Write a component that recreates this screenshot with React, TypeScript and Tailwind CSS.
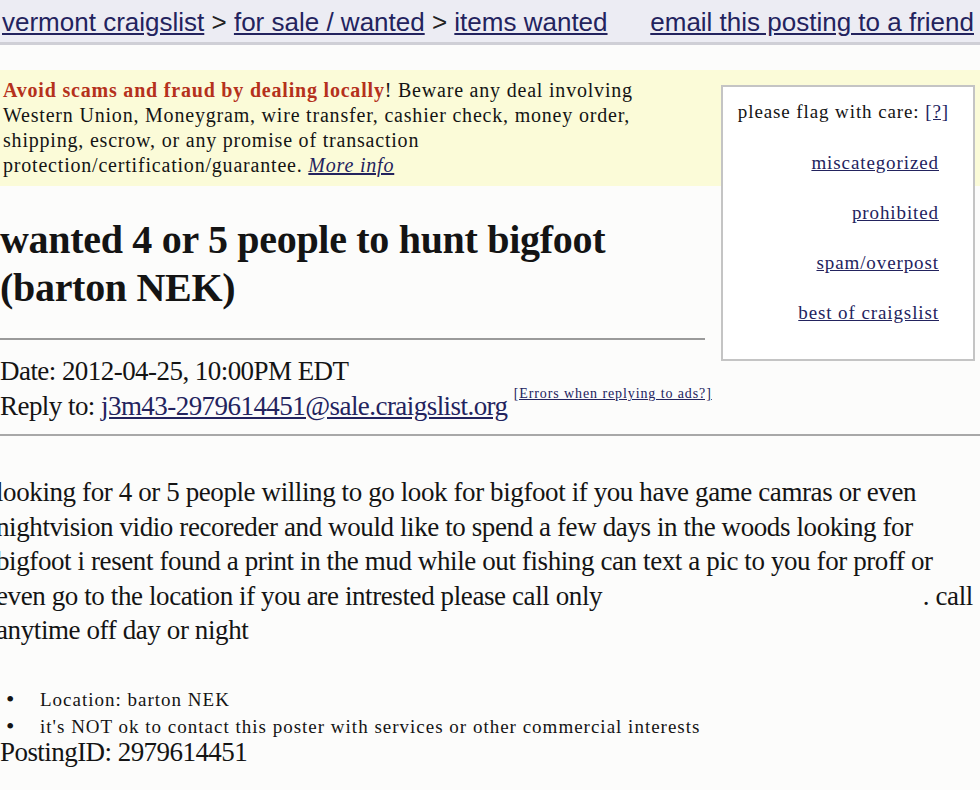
import React from 'react';

const serif = { fontFamily: '"Liberation Serif", "Times New Roman", serif' };

const App = () => {
  return (
    <div className="w-[980px] h-[790px] overflow-hidden bg-[#fcfcfb] text-[#141414]" style={serif}>
      {/* breadcrumb bar */}
      <div className="h-[45px] bg-[#ececf3] border-b-[3px] border-[#cfcfd6] flex items-end justify-between pl-[2px] pr-[6px] pb-[7px] text-[26px] leading-none text-[#23235e] font-['Liberation_Sans',Arial,sans-serif]">
        <div>
          <a className="underline">vermont craigslist</a>
          <span className="text-[#222]"> &gt; </span>
          <a className="underline">for sale / wanted</a>
          <span className="text-[#222]"> &gt; </span>
          <a className="underline">items wanted</a>
        </div>
        <a className="underline">email this posting to a friend</a>
      </div>

      <div className="mt-[25px]">
        {/* flag box */}
        <div className="float-right mt-[15px] mr-[5px] w-[254px] h-[276px] bg-white border-2 border-[#c4c4c4] pr-[34px] pt-[13px] text-right text-[19px] tracking-[0.9px] leading-[50px]">
          <div className="leading-[24px] mb-[14px] -mr-[10px]">
            please flag with care: <a className="underline text-[#23235e]">[?]</a>
          </div>
          <div><a className="underline text-[#23235e]">miscategorized</a></div>
          <div><a className="underline text-[#23235e]">prohibited</a></div>
          <div><a className="underline text-[#23235e]">spam/overpost</a></div>
          <div><a className="underline text-[#23235e]">best of craigslist</a></div>
        </div>

        {/* scam warning */}
        <div className="bg-[#fbfbd8] h-[116px] pl-[3px] pt-[8px] text-[20px] tracking-[0.8px] leading-[25px]">
          <div className="w-[660px]">
            <b className="text-[#b5311c]">Avoid scams and fraud by dealing locally</b>! Beware any deal involving Western
            Union, Moneygram, wire transfer, cashier check, money order, shipping, escrow, or any promise of
            transaction protection/certification/guarantee. <a className="italic underline text-[#23235e]">More info</a>
          </div>
        </div>

        <h2 className="mt-[30px] w-[680px] text-[40px] tracking-[-0.3px] leading-[48px] font-bold">
          wanted 4 or 5 people to hunt bigfoot (barton NEK)
        </h2>

        <div className="mt-[26px] mr-[275px] border-t-2 border-[#9a9a9a]" />

        <div className="pt-[14px] text-[27px] tracking-[-0.55px] leading-[35px]">
          <div>Date: 2012-04-25, 10:00PM EDT</div>
          <div>
            Reply to: <a className="underline text-[#23235e]">j3m43-2979614451@sale.craigslist.org</a>{' '}
            <sup className="text-[14px] tracking-[0.9px] align-[10px]">
              <a className="underline text-[#23235e]">[Errors when replying to ads?]</a>
            </sup>
          </div>
        </div>

        <div className="clear-both mt-[10px] border-t-2 border-[#a8a8a8]" />

        {/* posting body */}
        <div className="-ml-[4px] mt-[39px] w-[984px] text-[27px] tracking-[-0.4px] leading-[34.5px]">
          looking for 4 or 5 people willing to go look for bigfoot if you have game camras or even nightvision vidio
          recoreder and would like to spend a few days in the woods looking for bigfoot i resent found a print in the
          mud while out fishing can text a pic to you for proff or even go to the location if you are intrested please
          call only <span className="inline-block w-[308px]" /> . call anytime off day or night
        </div>

        <ul className="mt-[38px] text-[19px] tracking-[1px] leading-[27px]">
          <li className="flex">
            <span className="w-[40px] pl-[6px] text-[24px] leading-[27px]">•</span>
            <span>Location: barton NEK</span>
          </li>
          <li className="flex">
            <span className="w-[40px] pl-[6px] text-[24px] leading-[27px]">•</span>
            <span>it's NOT ok to contact this poster with services or other commercial interests</span>
          </li>
        </ul>

        <div className="text-[27px] tracking-[-0.55px] leading-[24px]">PostingID: 2979614451</div>
      </div>
    </div>
  );
};

export default App;
